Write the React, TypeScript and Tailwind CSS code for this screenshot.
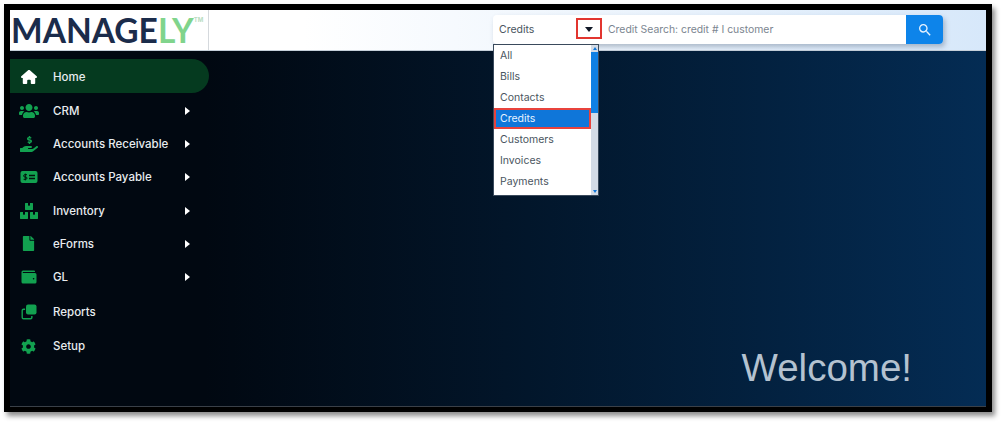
import React from "react";
import { FaUsers, FaHandHoldingUsd, FaBoxes, FaFile, FaCog } from "react-icons/fa";
import { FaHouse } from "react-icons/fa6";
import { MdSearch } from "react-icons/md";

function ReportsIcon({ size, className }: { size: number; className?: string }) {
  return (
    <svg width={size} height={size} viewBox="0 0 16 16" className={className} fill="currentColor">
      <path d="M2.5 4.5h1.6v1.4H2.8a.9.9 0 0 0-.9.9v6.4c0 .5.4.9.9.9h6.4c.5 0 .9-.4.9-.9v-1.2h1.5v1.5a2 2 0 0 1-2 2H2.5a2 2 0 0 1-2-2V6.5a2 2 0 0 1 2-2z" />
      <rect x="5" y="0.5" width="10.5" height="10" rx="2" />
    </svg>
  );
}

function WalletIcon({ size, className }: { size: number; className?: string }) {
  return (
    <svg width={size} height={size} viewBox="0 0 16 16" className={className} fill="currentColor">
      <path d="M2 1.5h11a1 1 0 0 1 1 1V3H2.2a.5.5 0 0 0 0 1H14a1.5 1.5 0 0 1 1.5 1.5v7.5a1.5 1.5 0 0 1-1.5 1.5H2A1.5 1.5 0 0 1 .5 13V3A1.5 1.5 0 0 1 2 1.5zM12.6 9a.8.8 0 1 0 0 1.6.8.8 0 0 0 0-1.6z" fillRule="evenodd" />
    </svg>
  );
}

function BillIcon({ size, className }: { size: number; className?: string }) {
  return (
    <svg width={size} height={size} viewBox="0 0 18 18" className={className}>
      <rect x="0.5" y="3" width="17" height="12" rx="2" fill="currentColor" />
      <path d="M7 6.7H4.8a1 1 0 0 0 0 2.3h1a1 1 0 0 1 0 2.3H3.6M5.3 5.6v6.8" fill="none" stroke="#02120c" strokeWidth="1" />
      <path d="M9 7.5h6M9 10.5h6" fill="none" stroke="#02120c" strokeWidth="1.4" />
    </svg>
  );
}

const nav = [
  { label: "Home", icon: FaHouse, arrow: false, h: "h-[34px]", size: 16 },
  { label: "CRM", icon: FaUsers, arrow: true, h: "h-[33px]", size: 20 },
  { label: "Accounts Receivable", icon: FaHandHoldingUsd, arrow: true, h: "h-[33px]", size: 18 },
  { label: "Accounts Payable", icon: BillIcon, arrow: true, h: "h-[34px]", size: 18 },
  { label: "Inventory", icon: FaBoxes, arrow: true, h: "h-[33px]", size: 18 },
  { label: "eForms", icon: FaFile, arrow: true, h: "h-[33px]", size: 15 },
  { label: "GL", icon: WalletIcon, arrow: true, h: "h-[34px]", size: 16 },
  { label: "Reports", icon: ReportsIcon, arrow: false, h: "h-[35px]", size: 16 },
  { label: "Setup", icon: FaCog, arrow: false, h: "h-[34px]", size: 15 },
];

const options = ["All", "Bills", "Contacts", "Credits", "Customers", "Invoices", "Payments"];

export default function App() {
  return (
    <div className="h-[425px] w-[1004px] overflow-hidden bg-white pl-1 pt-1 font-['Inter',sans-serif]">
      <div className="h-[408px] w-[988px] border-[6px] border-b-[5px] border-black shadow-[3px_4px_5px_rgba(0,0,0,0.45)]">
        <div className="flex h-full w-full flex-col">
          <header className="flex h-[41px] shrink-0 border-b border-[#c5cfd9] bg-gradient-to-r from-white from-30% to-[#d7e8fa]">
            <div className="flex w-[199px] items-start border-r border-[#d5d9dd] bg-white pl-[1px]">
              <span className="font-['Lato',sans-serif] text-[33.5px] font-bold leading-[40px] text-[#1b2c4b]">
                MANAGE<span className="text-[#80d48c]">LY</span>
              </span>
              <span className="mt-[6px] text-[6px] font-bold leading-[8px] text-[#b9dcbf]">TM</span>
            </div>
            <div className="relative ml-[284px] mt-[5px] flex h-[29px] w-[450px] rounded-[4px] bg-white shadow-[2px_3px_5px_rgba(60,80,110,0.35)]">
              <div className="flex w-[83px] items-center pl-[6px] text-[10.5px] text-[#4a5560]">Credits</div>
              <div className="mt-[3px] flex h-[21px] w-[26px] items-center justify-center border-2 border-[#e2352f]">
                <span className="mt-[1px] h-0 w-0 border-x-[4px] border-t-[5px] border-x-transparent border-t-[#111827]"></span>
              </div>
              <div className="flex flex-1 items-center pl-[6px] text-[10.4px] text-[#7b8590]">Credit Search: credit # I customer</div>
              <div className="flex w-[37px] items-center justify-center rounded-r-[4px] bg-[#0d84ea]">
                <MdSearch className="text-[#e8f3ff]" size={16} />
              </div>
              <div className="absolute left-0 top-[29px] z-10 flex h-[152px] w-[106px] border border-[#3a4a5c] bg-white">
                <ul className="flex-1">
                  {options.map((o) =>
                    o === "Credits" ? (
                      <li key={o} className="flex h-[21px] items-center border-2 border-[#e8433c] bg-[#0f76d9] pl-[4px] text-[10.5px] text-[#e6f2ff]">{o}</li>
                    ) : (
                      <li key={o} className="flex h-[21px] items-center pl-[6px] text-[10.5px] text-[#4a5560]">{o}</li>
                    )
                  )}
                </ul>
                <div className="flex w-[7px] flex-col bg-[#d3dbe6]">
                  <div className="flex h-[7px] items-center justify-center"><span className="h-0 w-0 border-x-[2px] border-b-[3px] border-x-transparent border-b-[#0f76d9]"></span></div>
                  <div className="h-[61px] bg-[#0f80e4]"></div>
                  <div className="flex-1"></div>
                  <div className="flex h-[7px] items-center justify-center"><span className="h-0 w-0 border-x-[2px] border-t-[3px] border-x-transparent border-t-[#0f76d9]"></span></div>
                </div>
              </div>
            </div>
          </header>
          <div className="flex flex-1 border-b border-[#3a4048] bg-gradient-to-r from-[#010811] from-20% to-[#042c54]">
            <nav className="w-[199px] shrink-0 pt-2">
              {nav.map((n) => {
                const Icon = n.icon;
                const active = n.label === "Home";
                return (
                  <div key={n.label} className={`flex items-center pt-[2px] ${n.h} ${active ? "rounded-r-[17px] bg-[#053a1f]" : ""}`}>
                    <div className="flex w-[43px] shrink-0 justify-center pr-[6px]">
                      <Icon size={n.size} className={active ? "text-white" : "text-[#12a150]"} />
                    </div>
                    <span className="mt-[2px] w-[132px] shrink-0 whitespace-nowrap text-[11.5px] font-medium text-[#e8ecef]">{n.label}</span>
                    {n.arrow && <span className="h-0 w-0 border-y-[4px] border-l-[5px] border-y-transparent border-l-white"></span>}
                  </div>
                );
              })}
            </nav>
            <main className="flex flex-1 items-end justify-end pb-4 pr-[74px]">
              <h1 className="font-['Liberation_Sans',sans-serif] text-[38.5px] font-normal leading-[44px] text-[#b4c2d0]">Welcome!</h1>
            </main>
          </div>
        </div>
      </div>
    </div>
  );
}
